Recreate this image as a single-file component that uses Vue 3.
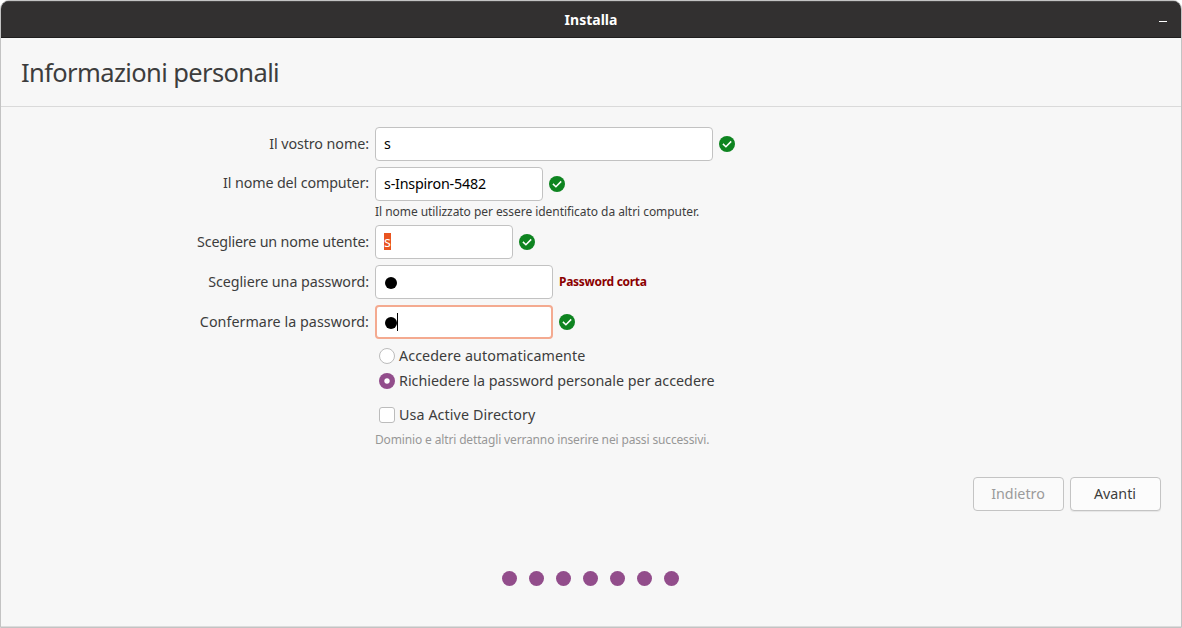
<script setup>
const rows = [
  { id: 'name', label: 'Il vostro nome:', value: 's', ok: true },
  { id: 'host', label: 'Il nome del computer:', value: 's-Inspiron-5482', ok: true, hint: 'Il nome utilizzato per essere identificato da altri computer.' },
  { id: 'user', label: 'Scegliere un nome utente:', value: 's', ok: true },
  { id: 'pass', label: 'Scegliere una password:', secret: true, warning: 'Password corta' },
  { id: 'confirm', label: 'Confermare la password:', secret: true, ok: true },
]
</script>

<template>
  <div class="window">
    <header class="titlebar">
      <span class="t-title">Installa</span>
      <span class="minimize"></span>
    </header>
    <div class="heading"><h1>Informazioni personali</h1></div>

    <main class="form">
      <template v-for="row in rows" :key="row.id">
        <div class="row" :class="row.id">
          <span class="label"><span class="label-text">{{ row.label }}</span></span>
          <div class="field">
            <span v-if="row.secret" class="bullet"></span>
            <span v-else class="value">{{ row.value }}</span>
            <span v-if="row.id === 'confirm'" class="caret"></span>
          </div>
          <svg v-if="row.ok" class="ok" width="16" height="16" viewBox="0 0 16 16">
            <circle cx="8" cy="8" r="8" fill="#0e8420" />
            <path d="M3.9 7.9 L6.9 10.7 L12.2 5.4" fill="none" stroke="#fff" stroke-width="1.5" />
          </svg>
          <span v-if="row.warning" class="warning">{{ row.warning }}</span>
        </div>
        <div v-if="row.hint" class="hint"><span class="hint-host">{{ row.hint }}</span></div>
      </template>

      <div class="option auto"><span class="radio"></span><span class="o1">Accedere automaticamente</span></div>
      <div class="option ask"><span class="radio on"></span><span class="o2">Richiedere la password personale per accedere</span></div>
      <div class="option ad"><span class="check"></span><span class="o3">Usa Active Directory</span></div>
      <div class="hint muted"><span class="hint-ad">Dominio e altri dettagli verranno inserire nei passi successivi.</span></div>
    </main>

    <div class="actions">
      <div class="btn disabled"><span>Indietro</span></div>
      <div class="btn"><span>Avanti</span></div>
    </div>

    <div class="dots"><span v-for="n in 7" :key="n" class="dot"></span></div>
  </div>
</template>

<style>
body { background: #fff; overflow: hidden; }
</style>

<style scoped>
.window {
  box-sizing: border-box;
  width: 1182px;
  height: 628px;
  border: 1px solid #c3c3c3;
  border-radius: 9px 9px 0 0;
  background: #f7f7f7;
  box-shadow: inset 0 -1px 0 #dcdcdc;
  overflow: hidden;
  font-family: "Noto Sans", "Open Sans", sans-serif;
  font-size: 14.3px;
  color: #3d3d3d;
  white-space: nowrap;
}
.titlebar {
  box-sizing: border-box;
  position: relative;
  height: 37px;
  display: flex;
  align-items: center;
  justify-content: center;
  background: #323030;
  border-top: 1px solid #484646;
  border-bottom: 1px solid #1f1e1e;
  color: #fff;
  font-weight: 700;
  font-size: 14px;
}
.minimize {
  position: absolute;
  right: 14px;
  top: 19px;
  width: 8px;
  height: 1px;
  background: #fff;
}
.heading {
  box-sizing: border-box;
  height: 69px;
  padding-left: 20px;
  display: flex;
  align-items: center;
  border-bottom: 1px solid #dadada;
}
h1 { margin: 0; font-size: 25.5px; font-weight: 400; line-height: 36px; letter-spacing: -0.62px; }
.form { padding-top: 20px; height: 350px; box-sizing: border-box; }
.row { display: flex; align-items: center; gap: 6px; height: 34px; margin-bottom: 6px; }
.row.host { margin-bottom: 0; }
.label { width: 368px; display: flex; justify-content: flex-end; padding-bottom: 2px; }
.host .label { padding-bottom: 4px; }
.name .label-text { letter-spacing: -0.07px; }
.host .label-text { letter-spacing: -0.13px; }
.user .label-text { letter-spacing: -0.18px; }
.pass .label-text { letter-spacing: -0.07px; }
.confirm .label-text { letter-spacing: 0.04px; }
.field {
  box-sizing: border-box;
  height: 34px;
  padding-left: 8px;
  display: flex;
  align-items: center;
  border: 1px solid #c2c2c2;
  border-radius: 4px;
  background: #fff;
  color: #000;
}
.name .field { width: 338px; }
.host .field { width: 168px; }
.user .field { width: 138px; }
.pass .field, .confirm .field { width: 178px; }
.confirm .field { border: 2px solid #f4aa90; padding-left: 7px; }
.value { margin-bottom: 2px; }
.host .value { letter-spacing: -0.2px; }
.user .value { background: #e95420; color: #fff; line-height: 17px; height: 17px; width: 7px; margin-bottom: 1px; }
.bullet { width: 12px; height: 12px; margin: 2px 0.4px 0 0.6px; border-radius: 50%; background: #000; }
.caret { width: 1px; height: 18px; background: #000; }
.ok { display: block; }
.warning { color: #8b0000; font-weight: 700; font-size: 12px; letter-spacing: -0.29px; margin-bottom: 2px; }
.hint { height: 24px; padding-left: 374px; line-height: 21px; font-size: 12px; }
.hint-host { letter-spacing: -0.05px; }
.hint-ad { letter-spacing: -0.145px; }
.option { display: flex; align-items: center; gap: 4px; height: 25px; padding-left: 378px; }
.o1 { letter-spacing: 0.08px; }
.o3 { letter-spacing: 0.09px; }
.auto { margin-top: -2px; }
.ad { margin-top: 9px; }
.muted { color: #979797; height: 25px; line-height: 26px; }
.radio, .check { box-sizing: border-box; width: 16px; height: 16px; border: 1px solid #bcbcbc; background: #fff; }
.radio { border-radius: 50%; }
.radio.on { border: none; background: radial-gradient(circle, #fff 2.2px, #924d8b 3.2px); }
.check { border-radius: 3px; }
.actions { display: flex; justify-content: flex-end; gap: 6px; padding-right: 20px; margin-top: 20px; }
.btn {
  box-sizing: border-box;
  width: 91px;
  height: 34px;
  padding: 0 1px 2px 0;
  display: flex;
  align-items: center;
  justify-content: center;
  border: 1px solid #c4c4c4;
  border-radius: 4px;
  background: #fcfcfc;
  box-shadow: 0 1px 1px rgba(0, 0, 0, 0.07);
}
.btn.disabled { color: #9b9b9b; background: #fafafa; box-shadow: none; }
.dots { display: flex; justify-content: center; gap: 12px; margin-top: 60px; padding-right: 1px; }
.dot { width: 15px; height: 15px; border-radius: 50%; background: #924d8b; }
</style>
